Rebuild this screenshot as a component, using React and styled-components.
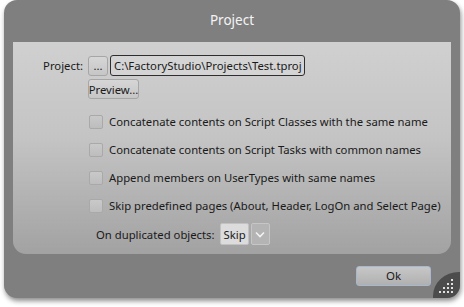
import styled, { createGlobalStyle } from "styled-components";

const Global = createGlobalStyle`
    body {
        margin: 0;
        background: #ffffff;
        font-family: 'Noto Sans', 'Open Sans', sans-serif;
    }
`;

const Page = styled.div`
    width: 464px;
    height: 307px;
    padding: 0 4px 9px 4px;
    box-sizing: border-box;
`;

const Frame = styled.div`
    display: flex;
    flex-direction: column;
    height: 100%;
    background: #7f7f7f;
    border-radius: 13px;
    box-shadow: 1px 3px 5px rgba(0, 0, 0, 0.45);
    position: relative;
    overflow: hidden;
`;

const Title = styled.div`
    height: 42px;
    display: flex;
    align-items: center;
    justify-content: center;
    color: #f4f4f4;
    font-size: 13.5px;
    padding-bottom: 2px;
    box-sizing: border-box;
`;

const Panel = styled.div`
    margin: 0 9px;
    height: 212px;
    background: linear-gradient(#d0d0d0, #c4c4c4 45%, #a2a2a2);
    border-radius: 0 0 13px 13px;
    padding: 13px 0 0 0;
    box-sizing: border-box;
    font-size: 11.3px;
    color: #1a1a1a;
`;

const Row = styled.div`
    display: flex;
    align-items: center;
    gap: ${p => p.gap || 0}px;
    margin-left: ${p => p.left || 0}px;
    margin-top: ${p => p.top || 0}px;
`;

const Label = styled.span`
    width: ${p => p.width}px;
    text-align: right;
    padding-right: 5px;
    box-sizing: border-box;
`;

const SmallButton = styled.div`
    height: 20px;
    width: ${p => p.width}px;
    display: flex;
    align-items: center;
    justify-content: center;
    border: 1px solid #a6a6a6;
    border-radius: 3px;
    background: linear-gradient(#d6d6d6, #c6c6c6);
    box-sizing: border-box;
    color: #1a1a1a;
    white-space: nowrap;
`;

const PathBox = styled.div`
    height: 21px;
    width: 195px;
    margin-left: 2px;
    border: 1px solid #2e2e2e;
    border-radius: 3px;
    background: #d4d4d4;
    box-sizing: border-box;
    padding-left: 3px;
    display: flex;
    align-items: center;
    white-space: nowrap;
    overflow: hidden;
`;

const CheckList = styled.div`
    display: flex;
    flex-direction: column;
    gap: 13px;
    margin: 15px 0 0 76px;
`;

const CheckRow = styled.label`
    display: flex;
    align-items: center;
    gap: 6px;
    height: 15px;
    white-space: nowrap;
`;

const Box = styled.span`
    flex-shrink: 0;
    width: 14px;
    height: 14px;
    border: 1px solid #a9a9a9;
    border-radius: 2px;
    background: linear-gradient(#c9c9c9, #bdbdbd);
    box-sizing: border-box;
`;

const Combo = styled.div`
    display: flex;
    gap: 2px;
`;

const ComboValue = styled.div`
    height: 22px;
    padding: 0 2px 0 3px;
    display: flex;
    align-items: center;
    background: #dcdcdc;
    border: 1px solid #c2c2c2;
    border-radius: 2px;
    box-sizing: border-box;
`;

const ComboArrow = styled.div`
    width: 19px;
    height: 22px;
    display: flex;
    align-items: center;
    justify-content: center;
    background: #b4b4b4;
    border: 1px solid #c6c6c6;
    border-radius: 2px;
    box-sizing: border-box;
`;

const Footer = styled.div`
    flex: 1;
    display: flex;
    align-items: center;
    justify-content: flex-end;
    padding: 0 29px 1px 0;
`;

const OkButton = styled.div`
    width: 75px;
    height: 20px;
    display: flex;
    align-items: center;
    justify-content: center;
    border: 1px solid #a9b8cc;
    border-radius: 3px;
    background: linear-gradient(#c7c7c7, #b0b0b0);
    box-sizing: border-box;
    font-size: 11.5px;
    color: #1a1a1a;
`;

const Grip = styled.div`
    position: absolute;
    right: 0;
    bottom: 0;
    width: 27px;
    height: 26px;
    background: #4c4c4c;
    border-top-left-radius: 26px 24px;
`;

function Arrow() {
    return (
        <svg width="10" height="7" viewBox="0 0 10 7">
            <path d="M1 1.5 L5 5.5 L9 1.5" fill="none" stroke="#f2f2f2" strokeWidth="1.6" />
        </svg>
    );
}

function GripDots() {
    const dots = [[17, 7], [17, 11], [13, 11], [17, 15], [13, 15], [9, 15], [17, 19], [13, 19], [9, 19], [5, 19]];
    return (
        <svg width="26" height="26" viewBox="0 0 26 26" style={{ position: "absolute", right: 0, bottom: 0 }}>
            {dots.map(([x, y]) => <rect key={x + "-" + y} x={x} y={y} width="2" height="2" fill="#e0e0e0" />)}
        </svg>
    );
}

const options = [
    "Concatenate contents on Script Classes with the same name",
    "Concatenate contents on Script Tasks with common names",
    "Append members on UserTypes with same names",
    "Skip predefined pages (About, Header, LogOn and Select Page)",
];

export default function App() {
    return (
        <Page>
            <Global />
            <Frame>
                <Title>Project</Title>
                <Panel>
                    <Row>
                        <Label width={75}>Project:</Label>
                        <SmallButton width={20}>...</SmallButton>
                        <PathBox>C:\FactoryStudio\Projects\Test.tproj</PathBox>
                    </Row>
                    <Row left={75} top={3}>
                        <SmallButton width={51}>Preview...</SmallButton>
                    </Row>
                    <CheckList>
                        {options.map(o => (
                            <CheckRow key={o}>
                                <Box />
                                {o}
                            </CheckRow>
                        ))}
                    </CheckList>
                    <Row left={83} top={10} gap={5}>
                        <span>On duplicated objects:</span>
                        <Combo>
                            <ComboValue>Skip</ComboValue>
                            <ComboArrow><Arrow /></ComboArrow>
                        </Combo>
                    </Row>
                </Panel>
                <Footer>
                    <OkButton>Ok</OkButton>
                </Footer>
                <Grip>
                    <GripDots />
                </Grip>
            </Frame>
        </Page>
    );
}
